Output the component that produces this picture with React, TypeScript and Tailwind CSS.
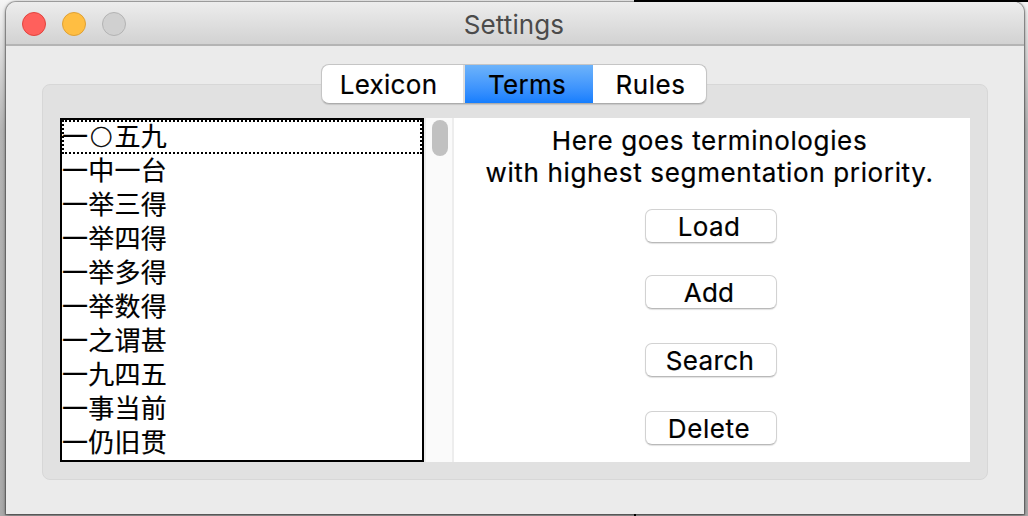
import React from "react";

const terms = ["一○五九", "一中一台", "一举三得", "一举四得", "一举多得", "一举数得", "一之谓甚", "一九四五", "一事当前", "一仍旧贯"];

function TermText({ term }: { term: string }) {
  return (
    <span className="flex">
      {[...term].map((char, i) =>
        char === "○" ? (
          <span key={i} className="w-[26.25px] text-center text-[22px] [-webkit-text-stroke:0.5px_black]">
            {char}
          </span>
        ) : (
          <span key={i} className="w-[26.25px]">
            {char}
          </span>
        ),
      )}
    </span>
  );
}

function PushButton({ label, className }: { label: string; className: string }) {
  return (
    <button
      className={`flex h-[34px] w-[132px] shrink-0 items-center justify-center rounded-[7px] border border-[#d2d2d2] border-b-[#b9b9b9] bg-white pt-[2px] text-[26px] leading-[34px] shadow-[0_1px_1px_rgba(0,0,0,0.12)] ${className}`}
    >
      <span className="whitespace-nowrap">{label}</span>
    </button>
  );
}

function TitleBar() {
  return (
    <header className="grid h-[44px] shrink-0 grid-cols-[1fr_auto_1fr] items-center border-b-2 border-[#b4b4b4] bg-linear-to-b from-[#ededed] to-[#d2d2d2]">
      <div className="flex gap-4 pt-[2px] pl-[16px]">
        <span className="size-6 rounded-full border border-[#e0443e] bg-[#ff605c]" />
        <span className="size-6 rounded-full border border-[#dea035] bg-[#ffbe42]" />
        <span className="size-6 rounded-full border border-[#b3b3b3] bg-[#d0d0d0]" />
      </div>
      <h1 className="pt-[4px] pr-[2px] text-[26px] leading-[38px] tracking-[0.1px] text-[#4b4b4b]">Settings</h1>
      <span />
    </header>
  );
}

export default function App() {
  return (
    <div className="h-[516px] w-[1028px] overflow-hidden bg-linear-to-b from-[#f5f5f5] via-[#b5b5b5] via-25% to-[#aaaaaa] font-['Inter','Noto_Sans_CJK_SC',sans-serif] text-black">
      <div className="flex h-[2px] justify-end">
        <div className="w-[394px] bg-black" />
      </div>
      <main className="ml-[6px] flex h-[512px] w-[1018px] flex-col overflow-hidden rounded-t-[10px] bg-[#ebebeb] shadow-[0_0_1px_1px_rgba(0,0,0,0.3),0_1px_4px_rgba(0,0,0,0.5)]">
        <TitleBar />
        <div className="flex flex-col items-center pt-[18px]">
          <nav className="z-10 mr-[2px] flex h-[40px] w-[386px] overflow-hidden rounded-[8px] border border-[#c5c5c5] border-b-[#acacac] bg-white text-[26px] leading-[40px] shadow-[0_1px_1px_rgba(0,0,0,0.12)] [-webkit-text-stroke:0.2px_black]">
            <button className="w-[143px] border-r-2 border-[#dedede] pr-[8px] tracking-[0.3px]">Lexicon</button>
            <button className="w-[128px] bg-linear-to-b from-[#6db3fa] to-[#147efe] pr-[4px] tracking-[0.3px]">Terms</button>
            <button className="w-[113px] pl-[2px] tracking-[0.5px]">Rules</button>
          </nav>
          <section className="-mt-[20px] flex h-[396px] w-[946px] rounded-[8px] border border-[#d7d7d7] bg-[#e1e1e1] px-[17px] pt-[33px] [-webkit-text-stroke:0.2px_black]">
            <ul className="h-[344px] w-[364px] border-2 border-black bg-white text-[26px] leading-[34px]">
              {terms.map((term, i) => (
                <li
                  key={term}
                  className={`flex h-[34px] items-center pb-[4px] font-['Noto_Sans_CJK_SC',sans-serif] [-webkit-text-stroke:0.2px_black] ${
                    i === 0 ? "outline-2 -outline-offset-2 outline-dotted outline-black" : ""
                  }`}
                >
                  <TermText term={term} />
                </li>
              ))}
            </ul>
            <div className="flex h-[344px] w-[30px] border-x-2 border-[#ededed] bg-[#fafafa] pt-[2px] pl-[6px]">
              <div className="h-[36px] w-4 rounded-full bg-[#c1c1c1]" />
            </div>
            <div className="flex h-[344px] w-[516px] flex-col items-center bg-white pt-[7px] pr-[2px]">
              <p className="pr-[3px] text-center text-[26px] leading-[32px] tracking-[0.65px] whitespace-nowrap">
                Here goes terminologies
                <br />
                with highest segmentation priority.
              </p>
              <PushButton label="Load" className="mt-[20px] pr-[4px] tracking-[0.3px]" />
              <PushButton label="Add" className="mt-[32px] pr-[4px] tracking-[0.3px]" />
              <PushButton label="Search" className="mt-[34px] pr-[2px] tracking-[0.4px]" />
              <PushButton label="Delete" className="mt-[34px] pr-[4px] tracking-[0.6px]" />
            </div>
          </section>
        </div>
      </main>
      <div className="flex h-[2px] pl-[634px]">
        <div className="w-[2px] bg-black" />
      </div>
    </div>
  );
}
